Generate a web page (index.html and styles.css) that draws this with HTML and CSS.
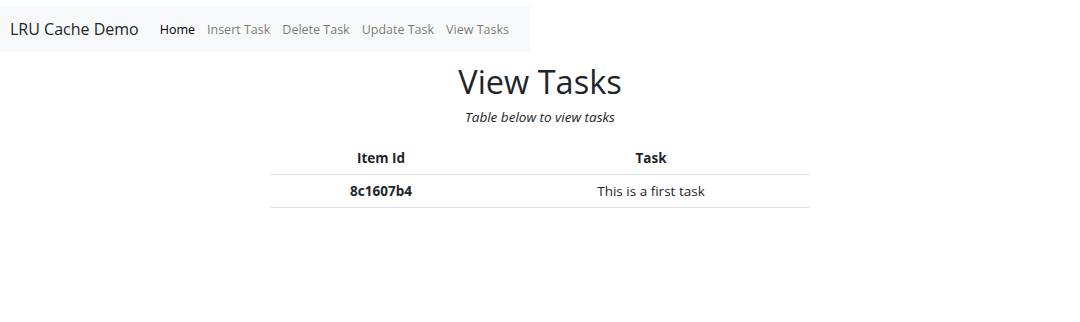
FILE: index.html
```html
<!DOCTYPE html>
<html lang="en">
<head>
    <meta charset="UTF-8">
    <title>View Tasks - LRU Cache Demo</title>
    <link rel="stylesheet" href="styles.css">
</head>
<body>

<nav class="navbar">
    <a class="brand" href="#">LRU Cache Demo</a>
    <div class="nav-links">
        <a class="active" href="#">Home</a>
        <a href="#">Insert Task</a>
        <a href="#">Delete Task</a>
        <a href="#">Update Task</a>
        <a href="#">View Tasks</a>
    </div>
</nav>

<div class="container">
    <h1>View Tasks</h1>
    <p class="subtitle">Table below to view tasks</p>

    <table class="tasks">
        <thead>
            <tr>
                <th class="col-id">Item Id</th>
                <th>Task</th>
            </tr>
        </thead>
        <tbody>
            <tr>
                <th class="col-id">8c1607b4</th>
                <td>This is a first task</td>
            </tr>
        </tbody>
    </table>
</div>

</body>
</html>
```

FILE: styles.css
```css
body {
    font-family: 'Open Sans', 'Noto Sans', sans-serif;
    color: #212529;
    background: #fff;
    margin: 0;
}

a {
    text-decoration: none;
    white-space: nowrap;
}

.navbar {
    display: flex;
    align-items: center;
    width: 530px;
    height: 46px;
    margin-top: 6px;
    background: #f8f9fa;
}

.brand {
    font-size: 16px;
    color: #212529;
    padding-left: 10px;
    margin-right: 21px;
}

.nav-links {
    display: flex;
    gap: 12px;
}

.nav-links a {
    font-size: 12.5px;
    color: rgba(0, 0, 0, 0.55);
}

.nav-links a.active {
    color: #000;
}

.container {
    display: flex;
    flex-direction: column;
    align-items: center;
}

h1 {
    font-size: 32.5px;
    font-weight: 500;
    margin: 10px 0 0;
    line-height: 1.2;
}

.subtitle {
    font-style: italic;
    font-size: 13.5px;
    margin: 7px 0 16px;
}

.tasks {
    width: 540px;
    border-collapse: collapse;
    font-size: 13.5px;
}

.tasks th,
.tasks td {
    text-align: center;
    padding: 7px 8px;
    border-bottom: 1px solid #dee2e6;
}

.tasks th {
    font-weight: 700;
}

.tasks .col-id {
    width: 206px;
}
```
